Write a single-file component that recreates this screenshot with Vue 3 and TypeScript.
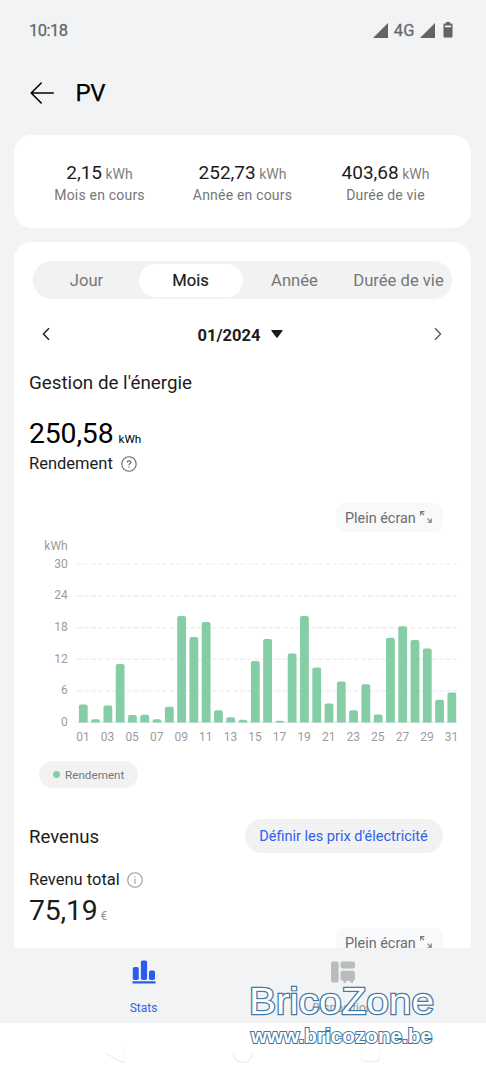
<script setup lang="ts">
const summary = [
  { value: '2,15', label: 'Mois en cours' },
  { value: '252,73', label: 'Année en cours' },
  { value: '403,68', label: 'Durée de vie' },
]
const tabs = ['Jour', 'Mois', 'Année', 'Durée de vie']
const activeTab = 'Mois'

const daily = [
  3.4, 0.6, 3.2, 11.1, 1.4, 1.45, 0.6, 3, 20.2, 16.2, 19.05, 2.3, 1, 0.5, 11.65, 15.85,
  0.35, 13.1, 20.2, 10.45, 3.6, 7.75, 2.3, 7.25, 1.5, 16.05, 18.25, 15.65, 14.05, 4.3, 5.7,
]
const ticks = [30, 24, 18, 12, 6, 0]
const BASE = 182.5
const yOf = (v: number) => BASE - v * 5.275
const xOf = (i: number) => 69.3 + i * 12.285

function barPath(v: number, i: number): string {
  const x = xOf(i) - 4.4
  const y = yOf(v)
  const r = Math.min(2, BASE - y)
  return `M${x} ${BASE}V${y + r}q0 ${-r} ${r} ${-r}h${8.8 - 2 * r}q${r} 0 ${r} ${r}V${BASE}z`
}
const dayLabels = daily.map((_, i) => i).filter((i) => i % 2 === 0)
</script>

<template>
  <div class="screen">
    <div class="status">
      <span class="clock">10:18</span>
      <div class="status-right">
        <svg width="15" height="15" viewBox="0 0 15 15"><path d="M0 15L15 0V15z" /></svg>
        <span class="net">4G</span>
        <svg width="15" height="15" viewBox="0 0 15 15"><path d="M0 15L15 0V15z" /></svg>
        <svg class="battery" width="10" height="16" viewBox="0 0 10 16">
          <path fill-rule="evenodd" d="M3 0h4v1.5h1.4q1.1 0 1.1 1.1V14.2q0 1.2-1.1 1.2H1.6q-1.1 0-1.1-1.2V2.6q0-1.1 1.1-1.1H3zM2 3.4v1.8h6V3.4z" />
        </svg>
      </div>
    </div>

    <header class="header">
      <svg width="24" height="22" viewBox="0 0 24 22" fill="none" stroke="#000" stroke-width="1.6" stroke-linecap="round" stroke-linejoin="round">
        <path d="M11.2 1L1.2 11L11.2 21M1.2 11H23.2" />
      </svg>
      <h1>PV</h1>
    </header>

    <section class="card summary">
      <div v-for="s in summary" :key="s.label" class="stat">
        <div class="stat-value"><span>{{ s.value }}</span><small>kWh</small></div>
        <div class="stat-label">{{ s.label }}</div>
      </div>
    </section>

    <section class="card main">
      <div class="tabs">
        <div v-for="t in tabs" :key="t" class="tab" :class="{ active: t === activeTab }">{{ t }}</div>
      </div>

      <div class="period">
        <svg width="8" height="14" viewBox="0 0 8 14" fill="none" stroke="#1a1a1a" stroke-width="1.4"><path d="M7 1.2L1.4 7L7 12.8" /></svg>
        <div class="date">
          <span>01/2024</span>
          <svg width="12" height="8" viewBox="0 0 12 8"><path d="M1 0H11Q12.3 0 11.5 1L6.8 7.3Q6 8.3 5.2 7.3L.5 1Q-.3 0 1 0z" fill="#1a1a1a" /></svg>
        </div>
        <svg width="8" height="14" viewBox="0 0 8 14" fill="none" stroke="#555" stroke-width="1.3"><path d="M1 1.2L6.6 7L1 12.8" /></svg>
      </div>

      <h2 class="energy-title">Gestion de l'énergie</h2>
      <div class="big"><span>250,58</span><small>kWh</small></div>
      <div class="yield">
        <span>Rendement</span>
        <svg width="16" height="16" viewBox="0 0 16 16" fill="none" stroke="#666" stroke-width="1.1">
          <circle cx="8" cy="8" r="7.2" />
          <path d="M6.1 6.5Q6.1 4.8 8 4.8T9.9 6.4Q9.9 7.2 8.9 7.8Q8 8.3 8 9.2M8 10.4V11.6" stroke-width="1.2" />
        </svg>
      </div>

      <div class="full">
        <span>Plein écran</span>
        <svg width="12" height="12" viewBox="0 0 12 12" fill="none" stroke="#777" stroke-width="1.1">
          <path d="M.6 4.4V.6H4.4M.6 .6L4 4M7.6 11.2H11.2V7.6M11.2 11.2L7.6 7.6" />
        </svg>
      </div>

      <svg class="chart" width="457" height="212" viewBox="0 0 457 212">
        <text x="53.7" y="10" class="axis end">kWh</text>
        <g v-for="t in ticks" :key="t">
          <line
            x1="63" x2="443" :y1="yOf(t)" :y2="yOf(t)"
            :class="t === 0 ? 'zero' : 'grid'"
          />
          <text x="53.7" :y="yOf(t) + 3.5" class="axis end">{{ t }}</text>
        </g>
        <path v-for="(v, i) in daily" :key="i" :d="barPath(v, i)" fill="#85cda5" />
        <text v-for="i in dayLabels" :key="i" :x="xOf(i) - 0.3" y="201.2" class="axis mid">{{ String(i + 1).padStart(2, '0') }}</text>
      </svg>

      <div class="legend"><i></i><span>Rendement</span></div>

      <div class="revenue-head">
        <h2>Revenus</h2>
        <div class="price">Définir les prix d'électricité</div>
      </div>
      <div class="total">
        <span>Revenu total</span>
        <svg width="16" height="16" viewBox="0 0 16 16" fill="none" stroke="#999" stroke-width="1.1">
          <circle cx="8" cy="8" r="7.3" />
          <path d="M8 4.2V5.6M8 6.8V11.8" />
        </svg>
      </div>
      <div class="euro"><span>75,19</span><small>€</small></div>
      <div class="full second">
        <span>Plein écran</span>
        <svg width="12" height="12" viewBox="0 0 12 12" fill="none" stroke="#777" stroke-width="1.1">
          <path d="M.6 4.4V.6H4.4M.6 .6L4 4M7.6 11.2H11.2V7.6M11.2 11.2L7.6 7.6" />
        </svg>
      </div>
    </section>

    <nav class="nav">
      <div class="nav-item on">
        <svg width="24" height="24" viewBox="0 0 24 24" fill="#2a5cf0">
          <rect x=".8" y="7" width="6" height="13" rx="1.8" />
          <rect x="8.9" y=".4" width="6.2" height="19.6" rx="1.8" />
          <rect x="17" y="10.4" width="6" height="9.6" rx="1.8" />
          <rect x=".3" y="21.2" width="23.4" height="2.4" rx="1" />
        </svg>
        <span>Stats</span>
      </div>
      <div class="nav-item">
        <svg width="24" height="24" viewBox="0 0 24 24" fill="#b9bbbd">
          <rect x="0" y="1.4" width="7.6" height="21.2" rx="1.8" />
          <rect x="9.6" y="1.4" width="14.4" height="7" rx="1.8" />
          <path d="M11.4 10.7H22.2Q24 10.7 24 12.5V18.8Q24 20.7 22 20.9V23H19.6V21H15V23H12.6V20.9Q9.6 20.6 9.6 18.5V12.5Q9.6 10.7 11.4 10.7z" />
        </svg>
        <span>Disposition</span>
      </div>
    </nav>

    <div class="system">
      <svg width="486" height="57" viewBox="0 0 486 57" fill="none" stroke="#ececec" stroke-width="1.2" stroke-linecap="round">
        <path d="M106.5 30.5L121.5 39.3Q124 40 124.5 37" />
        <path d="M124.5 37V23" stroke="#fafafa" />
        <path d="M233 31Q235 39.3 243 39.3T252.6 31" />
        <path d="M361.3 35Q361.3 38.3 363.5 38.3H376.5Q379 38.3 379 35" />
        <path d="M361.3 35V24M379 35V24" stroke="#fafafa" />
      </svg>
    </div>

    <svg class="mark" width="196" height="80" viewBox="0 0 196 80">
      <text x="4" y="33.5" class="mark-name" textLength="185" lengthAdjust="spacingAndGlyphs">BricoZone</text>
      <text x="6" y="63" class="mark-url" textLength="181" lengthAdjust="spacingAndGlyphs">www.bricozone.be</text>
    </svg>
  </div>
</template>

<style>
body { margin: 0; background: #fff; }
</style>

<style scoped>
.screen {
  position: relative;
  display: flex;
  flex-direction: column;
  width: 486px;
  height: 1080px;
  overflow: hidden;
  background: #f1f3f5;
  font-family: Roboto, "Liberation Sans", sans-serif;
  color: #1c1c1c;
}
h1, h2 { margin: 0; font-weight: 400; }
small { font-size: 12px; }
.status {
  flex: none;
  display: flex;
  justify-content: space-between;
  align-items: center;
  height: 60px;
  padding: 0 33px 0 29px;
  color: #66686a;
  font-size: 16.5px;
  -webkit-text-stroke: 0.3px #66686a;
}
.clock { letter-spacing: -0.5px; }
.status-right { display: flex; align-items: center; fill: #616365; }
.net { margin: 0 5px 0 6px; letter-spacing: 0.4px; }
.battery { margin-left: 8px; }
.header {
  flex: none;
  display: flex;
  align-items: center;
  gap: 21.5px;
  height: 65px;
  padding-left: 30px;
  margin-bottom: 10px;
}
h1 { font-size: 24px; line-height: 30px; color: #000; -webkit-text-stroke: 0.25px #000; letter-spacing: -0.3px; }
.card { background: #fff; margin: 0 15px 0 14px; border-radius: 18px; flex: none; }
.summary {
  display: flex;
  height: 66.5px;
  padding: 26px 14px 0;
  margin-bottom: 14.5px;
}
.stat { flex: 1; text-align: center; }
.stat-value { display: flex; justify-content: center; align-items: baseline; gap: 3.5px; font-size: 19px; line-height: 24px; }
.stat-value small { font-size: 14px; color: #808080; }
.stat-label { font-size: 14px; line-height: 18px; color: #777; letter-spacing: 0.2px; }
.main {
  height: 706px;
  overflow: hidden;
  border-radius: 18px 18px 0 0;
  display: flex;
  flex-direction: column;
}
.tabs {
  flex: none;
  display: flex;
  height: 33px;
  padding: 2.5px 1.5px;
  margin: 19px 19px 0;
  border-radius: 19px;
  background: #f2f2f2;
}
.tab {
  flex: 1 1 0;
  min-width: 0;
  text-align: center;
  white-space: nowrap;
  font-size: 16.6px;
  line-height: 34px;
  color: #777;
  border-radius: 17px;
}
.tab.active { background: #fff; color: #1a1a1a; -webkit-text-stroke: 0.2px #1a1a1a; }
.period {
  flex: none;
  display: flex;
  justify-content: space-between;
  align-items: center;
  height: 20px;
  margin: 25px 29px 0 28px;
}
.date { display: flex; align-items: center; gap: 11px; font-size: 16.5px; font-weight: 700; padding: 2px 3px 0 0; }
.date svg { margin-top: -2px; }
.energy-title { font-size: 18.8px; line-height: 24px; margin: 27px 0 0 15px; }
.big { display: flex; align-items: baseline; gap: 5px; font-size: 28.4px; line-height: 28px; color: #000; margin: 25px 0 0 15px; letter-spacing: -0.15px; }
.big small { font-size: 11.7px; letter-spacing: 0; }
.yield { display: flex; align-items: center; gap: 8px; font-size: 16.5px; line-height: 20px; margin: 1px 0 0 15px; }
.full {
  flex: none;
  align-self: flex-end;
  box-sizing: border-box;
  display: flex;
  gap: 4.5px;
  width: 107px;
  height: 29px;
  padding-left: 9.5px;
  margin: 29px 28.5px 0 0;
  border-radius: 9px;
  background: #f8f9fb;
  color: #6c6c6c;
  font-size: 14.4px;
  line-height: 31px;
}
.full svg { margin-top: 8px; }
.chart { flex: none; display: block; margin-top: 8px; }
.axis { font-size: 12px; fill: #9c9c9c; }
.end { text-anchor: end; }
.mid { text-anchor: middle; }
.grid { stroke: #e9ecf5; stroke-width: 1.2; stroke-dasharray: 4.6 2.5; }
.zero { stroke: #e4e8ec; stroke-width: 1.2; }
.legend {
  flex: none;
  display: flex;
  align-items: center;
  box-sizing: border-box;
  gap: 5px;
  width: 99px;
  height: 27px;
  margin: 9px 0 0 25px;
  padding-left: 13.5px;
  border-radius: 14px;
  background: #f2f2f2;
  font-size: 11.7px;
  color: #777;
}
.legend i { width: 7.5px; height: 7.5px; border-radius: 50%; background: #85cda5; }
.revenue-head {
  flex: none;
  display: flex;
  align-items: center;
  justify-content: space-between;
  margin: 31px 28.5px 0 15px;
}
.revenue-head h2 { font-size: 18.6px; padding-top: 2px; }
.price {
  box-sizing: border-box;
  width: 198px;
  height: 34px;
  border-radius: 17px;
  background: #f2f2f2;
  color: #2f60ef;
  font-size: 14.5px;
  line-height: 35px;
  text-align: center;
}
.total { display: flex; align-items: center; gap: 7px; font-size: 16.5px; line-height: 20px; margin: 17px 0 0 15px; }
.euro { display: flex; align-items: baseline; gap: 3px; font-size: 28.4px; line-height: 24px; margin: 9px 0 0 15px; letter-spacing: -0.2px; }
.euro small { color: #999; }
.full.second { margin-top: 0; }
.nav { flex: none; height: 75px; display: flex; padding: 0 44px; background: #f1f3f5; }
.nav-item { flex: 1; display: flex; flex-direction: column; align-items: center; padding-top: 11.5px; font-size: 12px; color: #999; }
.nav-item span { line-height: 16px; margin-top: 16px; }
.nav-item.on { color: #2f60ef; }
.system { flex: 1; background: #fff; }
.system svg { display: block; }
.mark { position: absolute; left: 245px; top: 980px; font-family: "Liberation Sans", Arial, sans-serif; }
.mark-name { font-size: 37px; fill: #fff; stroke: #4179a6; stroke-width: 2.4; paint-order: stroke; }
.mark-url { font-size: 20px; font-weight: 700; fill: #fff; stroke: #4179a6; stroke-width: 2; paint-order: stroke; }
</style>
